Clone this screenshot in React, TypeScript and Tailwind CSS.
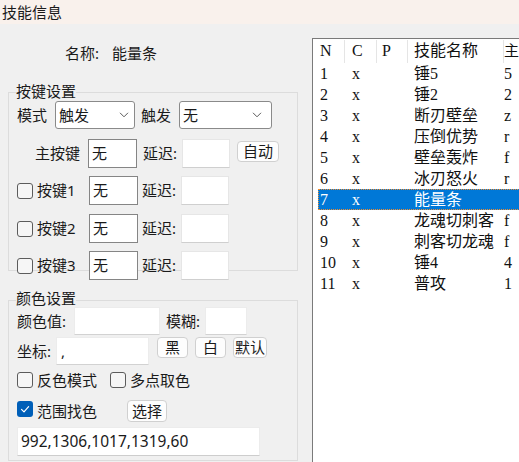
import React from "react";

function Check({ checked }: { checked?: boolean }) {
  if (checked) {
    return (
      <span className="w-[16px] h-[16px] rounded-[3px] bg-[#005fb8] flex items-center justify-center shrink-0">
        <svg width="16" height="16" viewBox="0 0 16 16">
          <path d="M4.5 8.3 L7 10.8 L11.6 5.6" fill="none" stroke="#ffffff" strokeWidth="1.2" strokeLinecap="round" strokeLinejoin="round" />
        </svg>
      </span>
    );
  }
  return <span className="w-[16px] h-[16px] rounded-[3px] border border-[#5c5c5c] bg-[#f6f6f6] shrink-0" />;
}

function Chevron() {
  return (
    <svg width="10" height="6" viewBox="0 0 10 6" className="shrink-0">
      <path d="M1 0.8 L5 4.8 L9 0.8" fill="none" stroke="#5a5a5a" strokeWidth="1" />
    </svg>
  );
}

const rows: [string, string, string][] = [
  ["1", "锤5", "5"],
  ["2", "锤2", "2"],
  ["3", "断刃壁垒", "z"],
  ["4", "压倒优势", "r"],
  ["5", "壁垒轰炸", "f"],
  ["6", "冰刃怒火", "r"],
  ["7", "能量条", ""],
  ["8", "龙魂切刺客", "f"],
  ["9", "刺客切龙魂", "f"],
  ["10", "锤4", "4"],
  ["11", "普攻", "1"],
];

export default function App() {
  return (
    <div className="w-[519px] h-[462px] overflow-hidden bg-[#f0f0f0] text-[#1a1a1a] font-['Noto_Sans','Noto_Sans_CJK_SC',sans-serif] text-[15px]">
      <div className="h-[24px] bg-[#f9f1ec] pl-[2px] flex items-center leading-none">技能信息</div>
      <div className="flex">
        {/* left panel */}
        <div className="w-[298px] shrink-0 pl-[8px]">
          <div className="mt-[19px] h-[20px] flex items-center pl-[57px] leading-none">
            <span className="w-[47px]">名称:</span>
            <span>能量条</span>
          </div>

          {/* group 1 */}
          <div className="mt-[29px] w-[290px] h-[179px] border border-[#dcdcdc]">
            <div className="-mt-[11px] ml-[7px] h-[19px] w-fit bg-[#f0f0f0] flex items-center leading-none">按键设置</div>
            <div className="flex items-center h-[28px] pl-[8px] leading-none">
              <span className="w-[38px]">模式</span>
              <div className="w-[80px] h-[28px] border border-[#8a8a8a] rounded-[3px] bg-white flex items-center justify-between pl-[3px] pr-[5px]">
                <span>触发</span>
                <Chevron />
              </div>
              <span className="ml-[6px] w-[38px]">触发</span>
              <div className="w-[93px] h-[28px] border border-[#8a8a8a] rounded-[3px] bg-white flex items-center justify-between pl-[3px] pr-[9px]">
                <span>无</span>
                <Chevron />
              </div>
            </div>

            <div className="mt-[10px] flex items-center h-[29px] pl-[26px] leading-none">
              <span className="w-[53px]">主按键</span>
              <div className="w-[49px] h-[29px] border border-[#858585] bg-white flex items-center pl-[3px]">无</div>
              <span className="ml-[6px] w-[39px]">延迟:</span>
              <div className="w-[48px] h-[29px] border border-[#e6e6e6] border-b-[#cfcfcf] bg-white" />
              <div className="ml-[7px] self-start mt-[2px] w-[42px] h-[21px] border border-[#d0d0d0] rounded-[4px] bg-[#fdfdfd] flex items-center justify-center">自动</div>
            </div>

            <div className="mt-[8px] flex items-center h-[29px] pl-[8px] leading-none">
              <Check />
              <span className="ml-[4px] w-[52px]">按键1</span>
              <div className="w-[49px] h-[29px] border border-[#858585] bg-white flex items-center pl-[3px]">无</div>
              <span className="ml-[4px] w-[39px]">延迟:</span>
              <div className="w-[48px] h-[29px] border border-[#e6e6e6] border-b-[#cfcfcf] bg-white" />
            </div>

            <div className="mt-[9px] flex items-center h-[29px] pl-[8px] leading-none">
              <Check />
              <span className="ml-[4px] w-[52px]">按键2</span>
              <div className="w-[49px] h-[29px] border border-[#858585] bg-white flex items-center pl-[3px]">无</div>
              <span className="ml-[4px] w-[39px]">延迟:</span>
              <div className="w-[48px] h-[29px] border border-[#e6e6e6] border-b-[#cfcfcf] bg-white" />
            </div>

            <div className="mt-[8px] flex items-center h-[29px] pl-[8px] leading-none">
              <Check />
              <span className="ml-[4px] w-[52px]">按键3</span>
              <div className="w-[49px] h-[29px] border border-[#858585] bg-white flex items-center pl-[3px]">无</div>
              <span className="ml-[4px] w-[39px]">延迟:</span>
              <div className="w-[48px] h-[29px] border border-[#e6e6e6] border-b-[#cfcfcf] bg-white" />
            </div>
          </div>

          {/* group 2 */}
          <div className="mt-[29px] w-[290px] h-[161px] border border-[#dcdcdc]">
            <div className="-mt-[11px] ml-[7px] h-[17px] w-fit bg-[#f0f0f0] flex items-center leading-none">颜色设置</div>
            <div className="flex items-center h-[28px] pl-[8px] leading-none">
              <span className="w-[57px]">颜色值:</span>
              <div className="w-[86px] h-[28px] border border-[#ececec] border-b-[#d2d2d2] bg-white" />
              <span className="ml-[6px] w-[39px]">模糊:</span>
              <div className="w-[42px] h-[28px] border border-[#ececec] border-b-[#d2d2d2] bg-white" />
            </div>

            <div className="mt-[2px] flex items-start h-[28px] pl-[8px] leading-none">
              <span className="w-[39px] self-center">坐标:</span>
              <div className="w-[93px] h-[28px] border border-[#ececec] border-b-[#d2d2d2] bg-white flex items-center pl-[4px]">,</div>
              <div className="ml-[8px] w-[31px] h-[21px] border border-[#d0d0d0] rounded-[4px] bg-[#fdfdfd] flex items-center justify-center">黑</div>
              <div className="ml-[7px] w-[31px] h-[21px] border border-[#d0d0d0] rounded-[4px] bg-[#fdfdfd] flex items-center justify-center">白</div>
              <div className="ml-[7px] w-[34px] h-[21px] border border-[#d0d0d0] rounded-[4px] bg-[#fdfdfd] flex items-center justify-center">默认</div>
            </div>

            <div className="mt-[7px] flex items-center h-[16px] pl-[8px] leading-none">
              <Check />
              <span className="ml-[4px] w-[73px]">反色模式</span>
              <Check />
              <span className="ml-[4px]">多点取色</span>
            </div>

            <div className="mt-[12px] flex items-start h-[22px] pl-[8px] leading-none">
              <span className="mt-[1px]">
                <Check checked />
              </span>
              <span className="ml-[4px] w-[90px] self-center">范围找色</span>
              <div className="w-[40px] h-[22px] border border-[#d0d0d0] rounded-[4px] bg-[#fdfdfd] flex items-center justify-center">选择</div>
            </div>

            <div className="mt-[5px] pl-[8px]">
              <div className="w-[243px] h-[29px] border border-[#ececec] border-b-[#cdcdcd] bg-white flex items-center pl-[3px] leading-none text-[15.5px]">
                992,1306,1017,1319,60
              </div>
            </div>
          </div>
        </div>

        {/* list */}
        <div className="ml-[14px] mt-[14px] w-[260px] h-[424px] shrink-0 border-l border-t border-[#7a7a7a] bg-white text-[#111] font-['Liberation_Serif','Noto_Sans_CJK_SC',serif] text-[16px]">
          <div className="flex h-[24px]">
            <div className="w-[32px] shrink-0 pl-[7px] border-r border-[#e5e5e5] mt-[1px] leading-[22px]">N</div>
            <div className="w-[32px] shrink-0 pl-[7px] border-r border-[#e5e5e5] mt-[1px] leading-[22px]">C</div>
            <div className="w-[31px] shrink-0 pl-[5px] border-r border-[#e5e5e5] mt-[1px] leading-[22px]">P</div>
            <div className="w-[96px] shrink-0 pl-[6px] border-r border-[#e5e5e5] mt-[1px] leading-[22px]">技能名称</div>
            <div className="whitespace-nowrap mt-[1px] leading-[22px] text-[15px]">主</div>
          </div>
          {rows.map(([n, name, key]) => {
            const sel = n === "7";
            return (
              <div
                key={n}
                className={
                  sel
                    ? "ml-[5px] flex h-[21px] leading-[21px] bg-[#0078d7] text-white outline-1 outline-dotted -outline-offset-1 outline-[#f08c30]"
                    : "ml-[5px] flex h-[21px] leading-[21px]"
                }
              >
                <div className="w-[27px] shrink-0 pl-[2px]">{n}</div>
                <div className="w-[32px] shrink-0 pl-[7px]">x</div>
                <div className="w-[31px] shrink-0" />
                <div className="w-[96px] shrink-0 pl-[6px] whitespace-nowrap">{name}</div>
                <div className="whitespace-nowrap">{key}</div>
              </div>
            );
          })}
        </div>
      </div>
    </div>
  );
}
